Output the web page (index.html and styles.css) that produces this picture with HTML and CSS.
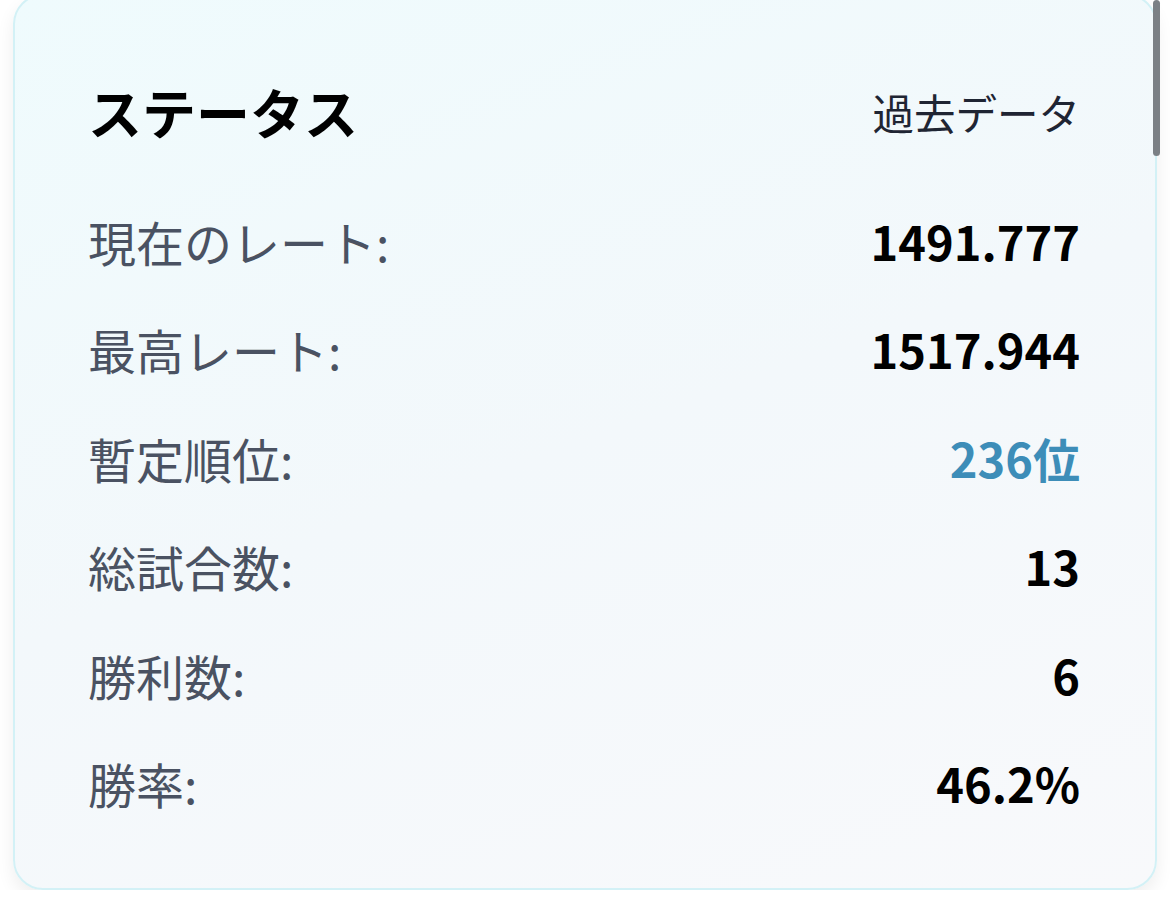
FILE: index.html
```html
<!DOCTYPE html>
<html lang="ja">
<head>
<meta charset="utf-8">
<link rel="stylesheet" href="styles.css">
</head>
<body>
<div class="card">
  <div class="header">
    <h2 class="title">ステータス</h2>
    <span class="link">過去データ</span>
  </div>
  <div class="rows">
    <div class="row"><span class="label">現在のレート:</span><span class="value">1491.777</span></div>
    <div class="row"><span class="label">最高レート:</span><span class="value">1517.944</span></div>
    <div class="row"><span class="label">暫定順位:</span><span class="value blue">236位</span></div>
    <div class="row"><span class="label">総試合数:</span><span class="value">13</span></div>
    <div class="row"><span class="label">勝利数:</span><span class="value">6</span></div>
    <div class="row"><span class="label">勝率:</span><span class="value">46.2%</span></div>
  </div>
</div>
<div class="scrollbar"></div>
</body>
</html>
```
FILE: styles.css
```css
html, body {
  margin: 0;
  padding: 0;
  background: #ffffff;
  font-family: "Noto Sans CJK JP", "Noto Sans", sans-serif;
  overflow: hidden;
}
.card {
  box-sizing: border-box;
  margin: -6px 0 0 13px;
  width: 1144px;
  height: 896px;
  border: 2px solid #d3f1f6;
  border-radius: 30px;
  background: linear-gradient(160deg, #effbfd 0%, #f3f8fb 50%, #f8f9fb 100%);
  box-shadow: 0 8px 18px rgba(0, 0, 0, 0.07);
  padding: 84px 75px 0 73px;
}
.header {
  display: flex;
  justify-content: space-between;
  align-items: center;
  height: 64px;
}
.title {
  margin: 0;
  font-size: 54px;
  font-weight: 700;
  color: #000;
  line-height: 64px;
}
.link {
  font-size: 41.5px;
  color: #1f2533;
  line-height: 64px;
}
.rows {
  margin-top: 67px;
  display: flex;
  flex-direction: column;
  gap: 48.4px;
}
.row {
  display: flex;
  justify-content: space-between;
  align-items: center;
  height: 60px;
}
.label {
  font-size: 48px;
  color: #4a5262;
  line-height: 60px;
}
.value {
  font-size: 47px;
  font-weight: 700;
  color: #000;
  line-height: 60px;
}
.value.blue {
  color: #3d8db8;
}
.scrollbar {
  position: absolute;
  left: 1153px;
  top: 0;
  width: 7px;
  height: 156px;
  border-radius: 4px;
  background: #7b8085;
}
```
